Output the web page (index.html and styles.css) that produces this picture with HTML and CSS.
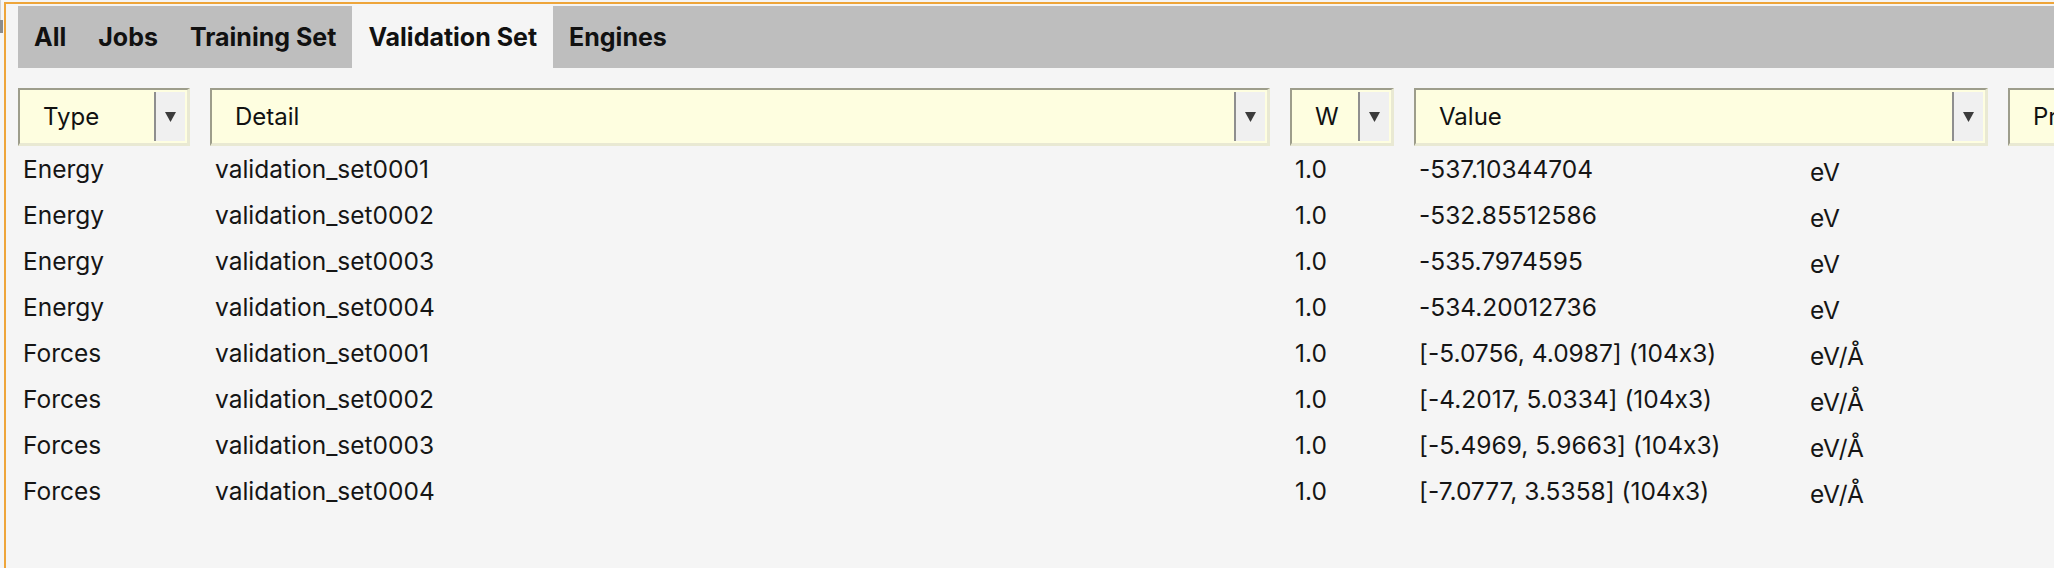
FILE: index.html
```html
<!DOCTYPE html>
<html lang="en">
<head>
<meta charset="utf-8">
<title>Validation Set</title>
<link rel="stylesheet" href="styles.css">
</head>
<body>
<div class="window">
  <div class="edge"><div class="edge-line"><span class="edge-grip"></span></div></div>
  <main class="panel">
    <nav class="tabs">
      <span class="tab">All</span>
      <span class="tab">Jobs</span>
      <span class="tab">Training Set</span>
      <span class="tab active">Validation Set</span>
      <span class="tab">Engines</span>
    </nav>

    <section class="table">
      <div class="head cols">
        <div class="hcell"><span class="hlabel">Type</span><span class="hbtn"><svg viewBox="0 0 11 10" width="11" height="10"><polygon points="0,0 11,0 5.5,10"/></svg></span></div>
        <div class="hcell"><span class="hlabel">Detail</span><span class="hbtn"><svg viewBox="0 0 11 10" width="11" height="10"><polygon points="0,0 11,0 5.5,10"/></svg></span></div>
        <div class="hcell"><span class="hlabel">W</span><span class="hbtn"><svg viewBox="0 0 11 10" width="11" height="10"><polygon points="0,0 11,0 5.5,10"/></svg></span></div>
        <div class="hcell"><span class="hlabel">Value</span><span class="hbtn"><svg viewBox="0 0 11 10" width="11" height="10"><polygon points="0,0 11,0 5.5,10"/></svg></span></div>
        <div class="hcell"><span class="hlabel">Prediction</span><span class="hbtn"><svg viewBox="0 0 11 10" width="11" height="10"><polygon points="0,0 11,0 5.5,10"/></svg></span></div>
      </div>

      <div class="row cols"><span class="cell">Energy</span><span class="cell">validation_set0001</span><span class="cell">1.0</span><span class="cell vcell"><span>-537.10344704</span><span class="unit">eV</span></span><span class="cell"></span></div>
      <div class="row cols"><span class="cell">Energy</span><span class="cell">validation_set0002</span><span class="cell">1.0</span><span class="cell vcell"><span>-532.85512586</span><span class="unit">eV</span></span><span class="cell"></span></div>
      <div class="row cols"><span class="cell">Energy</span><span class="cell">validation_set0003</span><span class="cell">1.0</span><span class="cell vcell"><span>-535.7974595</span><span class="unit">eV</span></span><span class="cell"></span></div>
      <div class="row cols"><span class="cell">Energy</span><span class="cell">validation_set0004</span><span class="cell">1.0</span><span class="cell vcell"><span>-534.20012736</span><span class="unit">eV</span></span><span class="cell"></span></div>
      <div class="row cols"><span class="cell">Forces</span><span class="cell">validation_set0001</span><span class="cell">1.0</span><span class="cell vcell"><span>[-5.0756, 4.0987] (104x3)</span><span class="unit">eV/Å</span></span><span class="cell"></span></div>
      <div class="row cols"><span class="cell">Forces</span><span class="cell">validation_set0002</span><span class="cell">1.0</span><span class="cell vcell"><span>[-4.2017, 5.0334] (104x3)</span><span class="unit">eV/Å</span></span><span class="cell"></span></div>
      <div class="row cols"><span class="cell">Forces</span><span class="cell">validation_set0003</span><span class="cell">1.0</span><span class="cell vcell"><span>[-5.4969, 5.9663] (104x3)</span><span class="unit">eV/Å</span></span><span class="cell"></span></div>
      <div class="row cols"><span class="cell">Forces</span><span class="cell">validation_set0004</span><span class="cell">1.0</span><span class="cell vcell"><span>[-7.0777, 3.5358] (104x3)</span><span class="unit">eV/Å</span></span><span class="cell"></span></div>
    </section>
  </main>
</div>
</body>
</html>
```

FILE: styles.css
```css
html, body {
  margin: 0;
  height: 100%;
  overflow: hidden;
}

body {
  background: #f5f5f5;
  font-family: Inter, "Liberation Sans", sans-serif;
  font-size: 24px;
  font-feature-settings: "calt" 0;
  color: #151515;
}

.window {
  display: flex;
  height: 100%;
}

/* thin strip of the parent window on the left */
.edge {
  width: 4px;
  flex: none;
}

.edge-line {
  height: 33px;
  border-left: 1px solid #d2d2d2;
  box-sizing: border-box;
  padding-top: 20px;
}

.edge-grip {
  display: block;
  width: 3px;
  height: 13px;
  margin-left: -1px;
  background: #8c8c8c;
}

/* focused panel, outlined in orange */
.panel {
  flex: 1;
  min-width: 0;
  margin-top: 2px;
  border-top: 2px solid #eea53a;
  border-left: 2px solid #eea53a;
  padding: 2px 0 0 12px;
  overflow: hidden;
}

/* tab strip */
.tabs {
  display: flex;
  height: 62px;
  background: #bebebe;
}

.tab {
  padding: 0 16px;
  line-height: 62px;
  font-size: 25px;
  font-weight: 700;
  color: #111;
  white-space: nowrap;
}

.tab.active {
  background: #f5f5f5;
}

/* table */
.table {
  margin-top: 20px;
}

.cols {
  display: grid;
  grid-template-columns: 172px 1060px 104px 574px 260px;
  column-gap: 20px;
}

.head {
  height: 58px;
}

.hcell {
  display: flex;
  box-sizing: border-box;
  height: 58px;
  padding: 2px 2px 2px 0;
  background: #fefee0;
  border-top: 2px solid #9d9d8b;
  border-left: 2px solid #9d9d8b;
  border-bottom: 3px solid #e9e9d3;
  border-right: 3px solid #e9e9d3;
}

.hlabel {
  flex: 1;
  display: flex;
  align-items: center;
  padding-left: 23px;
  color: #111;
  white-space: nowrap;
}

.hbtn {
  flex: none;
  width: 31px;
  box-sizing: border-box;
  border-left: 2px solid #8f8f8f;
  background: #f0f0f0;
  display: flex;
  align-items: center;
  justify-content: center;
}

.hbtn svg {
  fill: #3c3c3c;
}

.row {
  grid-auto-rows: 46px;
  height: 46px;
  line-height: 46px;
  font-size: 24.5px;
}

.cell {
  padding-left: 5px;
  white-space: nowrap;
}

.vcell {
  display: grid;
  grid-template-columns: 391px auto;
  align-items: start;
}

.unit {
  padding-top: 3px;
}
```
